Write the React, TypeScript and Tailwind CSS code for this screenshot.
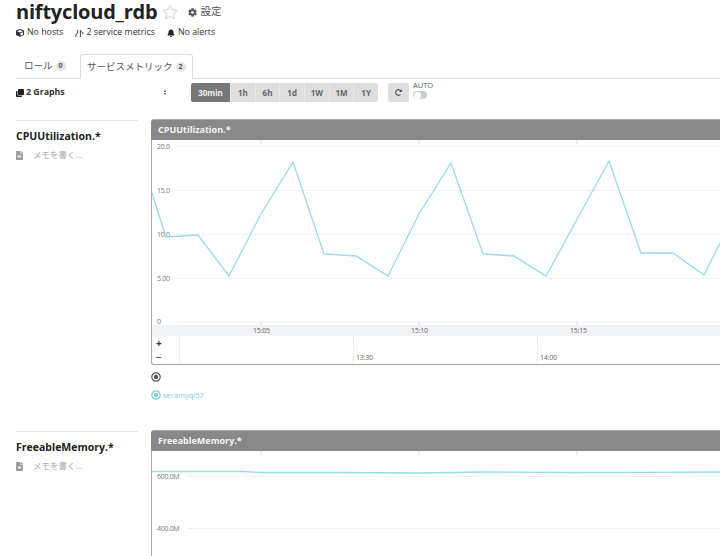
import React from "react";
import { FaBell, FaClone, FaCog, FaCube, FaFileAlt, FaRedoAlt, FaRegStar } from "react-icons/fa";

const FONT = "font-['Open_Sans','Noto_Sans_CJK_JP',sans-serif]";
const LINE = "#97dbe6";

const RANGES = ["30min", "1h", "6h", "1d", "1W", "1M", "1Y"];

const CPU_POINTS =
  "152,193 166,237 198,235 229,276 261,214 293,162 324,254 356,256 388,276 419,214 451,163 483,254 514,256 546,276 609,161 641,253 673,253 704,275 720,243";

// Grid line with the dotted look of the graph library
const GridLine = ({ y, from = 25 }: { y: number; from?: number }) => (
  <line x1={from} x2={568} y1={y} y2={y} stroke="#e4e4e4" strokeWidth={1} strokeDasharray="1 1" />
);

const AxisLabel = ({ y, children }: { y: number; children: React.ReactNode }) => (
  <text x={5} y={y} fontSize={7} letterSpacing={-0.3} fill="#777" fontFamily="Open Sans, sans-serif">
    {children}
  </text>
);

const Tick = ({ x }: { x: number }) => <line x1={x} x2={x} y1={0} y2={4} stroke="#ddd" strokeWidth={1} />;

const Radio = ({ className }: { className: string }) => (
  <svg viewBox="0 0 10 10" className={className} fill="none">
    <circle cx={5} cy={5} r={4.2} stroke="currentColor" strokeWidth={1.2} />
    <circle cx={5} cy={5} r={2.2} fill="currentColor" />
  </svg>
);

const GraphSide = ({ title }: { title: string }) => (
  <div className="w-[122px] ml-4 mr-[13px] shrink-0 border-t border-[#e6e6e6] pt-[7px]">
    <h3 className="text-[10.5px] leading-[16px] font-bold text-[#222]">{title}</h3>
    <div className="flex items-center mt-[4px] text-[#aaa]">
      <FaFileAlt className="w-[7px] h-[9px] text-[#999] mr-[10px]" />
      <span className="text-[8.5px] leading-[14px]">メモを書く...</span>
    </div>
  </div>
);

const PanelHeader = ({ title }: { title: string }) => (
  <div className="h-[21px] bg-[#888] rounded-tl-[3px] border-t border-[#aaa] pl-[7px] flex items-center">
    <span className="text-[9px] font-bold text-[#f4f4f4]">{title}</span>
  </div>
);

const CpuGraph = () => (
  <div className="flex-1 min-w-0 -mt-px">
    <PanelHeader title="CPUUtilization.*" />
    <div className="border-l border-b border-[#aaa] rounded-bl-[3px]">
      <svg width={568} height={185} viewBox="0 0 568 185" className="block">
        {[6, 50.5, 94.5, 138.5, 182].map((y) => (
          <GridLine key={y} y={y} />
        ))}
        {[109, 267, 425].map((x) => (
          <g key={x}>
            <Tick x={x} />
            <line x1={x} x2={x} y1={181} y2={185} stroke="#ddd" />
          </g>
        ))}
        <AxisLabel y={8.5}>20.0</AxisLabel>
        <AxisLabel y={52.5}>15.0</AxisLabel>
        <AxisLabel y={96.5}>10.0</AxisLabel>
        <AxisLabel y={140.5}>5.00</AxisLabel>
        <AxisLabel y={184}>0</AxisLabel>
        <polyline
          points={CPU_POINTS.split(" ")
            .map((p) => {
              const [x, y] = p.split(",").map(Number);
              return `${x - 152},${y - 140}`;
            })
            .join(" ")}
          fill="none"
          stroke={LINE}
          strokeWidth={1.3}
        />
      </svg>
      <div className="h-[11px] bg-[#f2f3f5] relative text-[7px] tracking-[-0.2px] leading-[11px] text-[#666]">
        <span className="absolute left-[101px]">15:05</span>
        <span className="absolute left-[259px]">15:10</span>
        <span className="absolute left-[418px]">15:15</span>
      </div>
      <div className="h-[28px] flex">
        <div className="w-[28px] border-r border-[#eee] flex flex-col items-start pl-[4px] text-[#333] shrink-0">
          <span className="text-[10px] leading-[14px] font-bold">+</span>
          <span className="text-[10px] leading-[14px] font-bold text-[#555]">−</span>
        </div>
        <div className="w-[174px] border-r border-dotted border-[#ddd] shrink-0" />
        <div className="w-[184px] border-r border-dotted border-[#ddd] shrink-0 pl-[2px] flex items-end">
          <span className="text-[7px] tracking-[-0.2px] leading-[12px] text-[#666]">13:30</span>
        </div>
        <div className="pl-[2px] flex items-end">
          <span className="text-[7px] tracking-[-0.2px] leading-[12px] text-[#666]">14:00</span>
        </div>
      </div>
    </div>
    <div className="mt-[7px]">
      <Radio className="block w-[10px] h-[10px] text-[#555]" />
    </div>
    <div className="mt-[7px] flex items-center text-[#7ed0dd]">
      <Radio className="w-[10px] h-[10px] mr-[2px]" />
      <span className="text-[7.5px] leading-[12px]">seramyql57</span>
    </div>
  </div>
);

const MemoryGraph = () => (
  <div className="flex-1 min-w-0 -mt-px">
    <PanelHeader title="FreeableMemory.*" />
    <div className="border-l border-[#aaa]">
      <svg width={568} height={105} viewBox="0 0 568 105" className="block">
        {[109, 267, 425].map((x) => (
          <Tick key={x} x={x} />
        ))}
        <GridLine y={25.5} from={35} />
        <GridLine y={77.5} from={35} />
        <polyline
          points="0,20.5 90,20.5 110,21.5 180,21.5 267,22 330,21 420,21.5 490,21.3 568,21"
          fill="none"
          stroke={LINE}
          strokeWidth={1.3}
        />
        <AxisLabel y={28}>600.0M</AxisLabel>
        <AxisLabel y={80}>400.0M</AxisLabel>
      </svg>
    </div>
  </div>
);

const MetricsIcon = () => (
  <svg viewBox="0 0 10 10" className="w-[9px] h-[9px] text-[#333] mr-[2px]" fill="none" stroke="currentColor" strokeWidth={1}>
    <path d="M1 9V6M1 6C3 6 3 3 3 1M6 9V1M6 3C7 3 9 3 9 6" />
  </svg>
);

export default function App() {
  return (
    <div className={`${FONT} w-[720px] h-[556px] overflow-hidden bg-white text-[#333]`}>
      {/* title */}
      <div className="h-[24px] pl-4 flex items-center">
        <h1 className="text-[20px] leading-[24px] tracking-[-0.2px] font-bold text-[#222]">niftycloud_rdb</h1>
        <FaRegStar className="w-[16px] h-[16px] text-[#ddd] ml-[5px]" />
        <FaCog className="w-[9px] h-[9px] text-[#555] ml-[10px] mr-[3px]" />
        <span className="text-[10.5px] text-[#555]">設定</span>
      </div>

      {/* summary */}
      <div className="h-[14px] mt-[2px] pl-4 flex items-center text-[8.8px] text-[#333]">
        <FaCube className="w-[8px] h-[8px] mr-[3px]" />
        <span className="mr-[12px]">No hosts</span>
        <MetricsIcon />
        <span className="mr-[12px]">2 service metrics</span>
        <FaBell className="w-[8px] h-[8px] text-[#222] mr-[3px]" />
        <span>No alerts</span>
      </div>

      {/* tabs */}
      <div className="h-[39px] ml-4 flex items-end border-b border-[#ddd]">
        <div className="h-[24px] w-[64px] pl-[8px] flex items-center text-[9.5px] text-[#555] whitespace-nowrap">
          ロール
          <span className="ml-[3px] w-[10px] h-[10px] rounded-full bg-[#e4e4e4] text-[7px] font-bold flex items-center justify-center">0</span>
        </div>
        <div className="h-[25px] w-[113px] -mb-px bg-white border border-b-0 border-[#ddd] rounded-t-[3px] pl-[6px] flex items-center text-[9.5px] text-[#555] whitespace-nowrap">
          サービスメトリック
          <span className="ml-[3px] w-[10px] h-[10px] rounded-full bg-[#e4e4e4] text-[7px] font-bold flex items-center justify-center">2</span>
        </div>
      </div>

      {/* toolbar */}
      <div className="h-[41px] pl-4 pt-[4px] flex items-start">
        <div className="w-[140px] h-[19px] flex items-center shrink-0">
          <FaClone className="w-[8px] h-[8px] text-[#222] mr-[2px]" />
          <span className="text-[8.8px] font-bold text-[#333]">2 Graphs</span>
          <div className="ml-auto mr-[-10px] flex flex-col gap-[1px]">
            <span className="w-0 h-0 border-x-[1.5px] border-x-transparent border-b-[2px] border-b-[#333]" />
            <span className="w-0 h-0 border-x-[1.5px] border-x-transparent border-t-[2px] border-t-[#333]" />
          </div>
        </div>
        <div className="ml-[35px] flex h-[19px] rounded-[2px] overflow-hidden text-[8px] font-bold text-[#666]">
          {RANGES.map((r, i) => (
            <div
              key={r}
              className={
                i === 0
                  ? "w-[39px] bg-[#777] text-[#eee] flex items-center justify-center"
                  : "w-[24.67px] bg-[#dedede] border-l border-[#e9e9e9] flex items-center justify-center"
              }
            >
              {r}
            </div>
          ))}
        </div>
        <div className="ml-[10px] w-[21px] h-[19px] rounded-[2px] bg-[#dedede] flex items-center justify-center">
          <FaRedoAlt className="w-[7px] h-[7px] text-[#555]" />
        </div>
        <div className="ml-[4px] -mt-[2px] flex flex-col items-start">
          <span className="text-[7.5px] leading-[9px] text-[#555]">AUTO</span>
          <span className="mt-[1px] w-[14px] h-[8px] rounded-full bg-[#ccc] flex items-center pl-[1px]">
            <span className="w-[7px] h-[7px] rounded-full bg-white" />
          </span>
        </div>
      </div>

      {/* graphs */}
      <div className="h-[311px] flex">
        <GraphSide title="CPUUtilization.*" />
        <CpuGraph />
      </div>
      <div className="flex">
        <GraphSide title="FreeableMemory.*" />
        <MemoryGraph />
      </div>
    </div>
  );
}
